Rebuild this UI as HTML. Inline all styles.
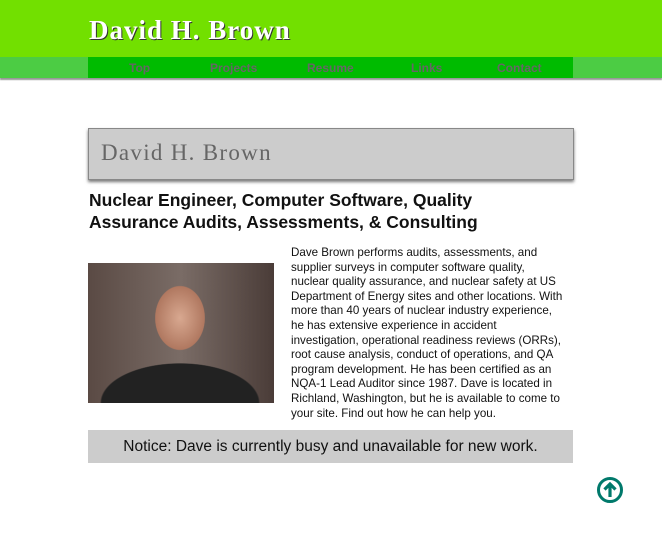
<!DOCTYPE html>
<html><head><style>
body{margin:0;width:662px;height:555px;background:#fff;font-family:"Liberation Sans",sans-serif;position:relative;overflow:hidden}
.hdr{position:absolute;left:0;top:0;width:662px;height:57px;background:#72e000}
.hdr h1{position:absolute;left:89px;top:15px;margin:0;font:bold 27px "Liberation Serif",serif;color:#fff;text-shadow:1px 1px 0 #333;letter-spacing:1px}
.navb{position:absolute;left:0;top:57px;width:662px;height:21px;background:#4ccc44;box-shadow:0 2px 1px #999}
.nav{position:absolute;left:88px;top:0;width:485px;height:21px;background:#00bb00;font-weight:bold;font-size:12px;color:#666}
.nav span{position:absolute;top:4px}
.box{position:absolute;left:88px;top:128px;width:484px;height:50px;background:#ccc;border:1px solid #888;box-shadow:0 2px 3px #777}
.box div{position:absolute;left:12px;top:11px;font:23px "Liberation Serif",serif;color:#666;letter-spacing:1.3px}
h2{position:absolute;left:89px;top:189px;margin:0;font-size:17.5px;font-weight:bold;line-height:22px;color:#111;width:410px}
.photo{position:absolute;left:88px;top:263px;width:186px;height:140px;background:radial-gradient(ellipse 35px 45px at 92px 55px,#d8a890 0,#b07860 70%,transparent 72%),radial-gradient(ellipse 80px 40px at 92px 140px,#222 0,#222 98%,transparent 100%),linear-gradient(90deg,#5a4a44,#7a6c66 50%,#4a3c38)}
.txt{position:absolute;left:291px;top:246px;width:273px;font-size:11.6px;line-height:14.6px;color:#111}
.note{position:absolute;left:88px;top:430px;width:485px;height:33px;background:#ccc;text-align:center;line-height:33px;font-size:15.5px;color:#111}
</style></head><body>
<div class="hdr"><h1>David H. Brown</h1></div>
<div class="navb"><div class="nav"><span style="left:41px">Top</span><span style="left:122px">Projects</span><span style="left:219px">Resume</span><span style="left:323px">Links</span><span style="left:409px">Contact</span></div></div>
<div class="box"><div>David H. Brown</div></div>
<h2>Nuclear Engineer, Computer Software, Quality Assurance Audits, Assessments, &amp; Consulting</h2>
<div class="photo"></div>
<div class="txt">Dave Brown performs audits, assessments, and supplier surveys in computer software quality, nuclear quality assurance, and nuclear safety at US Department of Energy sites and other locations. With more than 40 years of nuclear industry experience, he has extensive experience in accident investigation, operational readiness reviews (ORRs), root cause analysis, conduct of operations, and QA program development. He has been certified as an NQA-1 Lead Auditor since 1987. Dave is located in Richland, Washington, but he is available to come to your site. Find out how he can help you.</div>
<div class="note">Notice: Dave is currently busy and unavailable for new work.</div>
<svg style="position:absolute;left:596px;top:476px" width="28" height="28" viewBox="0 0 28 28"><circle cx="14" cy="14" r="11.5" fill="none" stroke="#00796b" stroke-width="3"/><path d="M14 21V8M8.5 13.5L14 8l5.5 5.5" fill="none" stroke="#00796b" stroke-width="3.2"/></svg>
</body></html>
